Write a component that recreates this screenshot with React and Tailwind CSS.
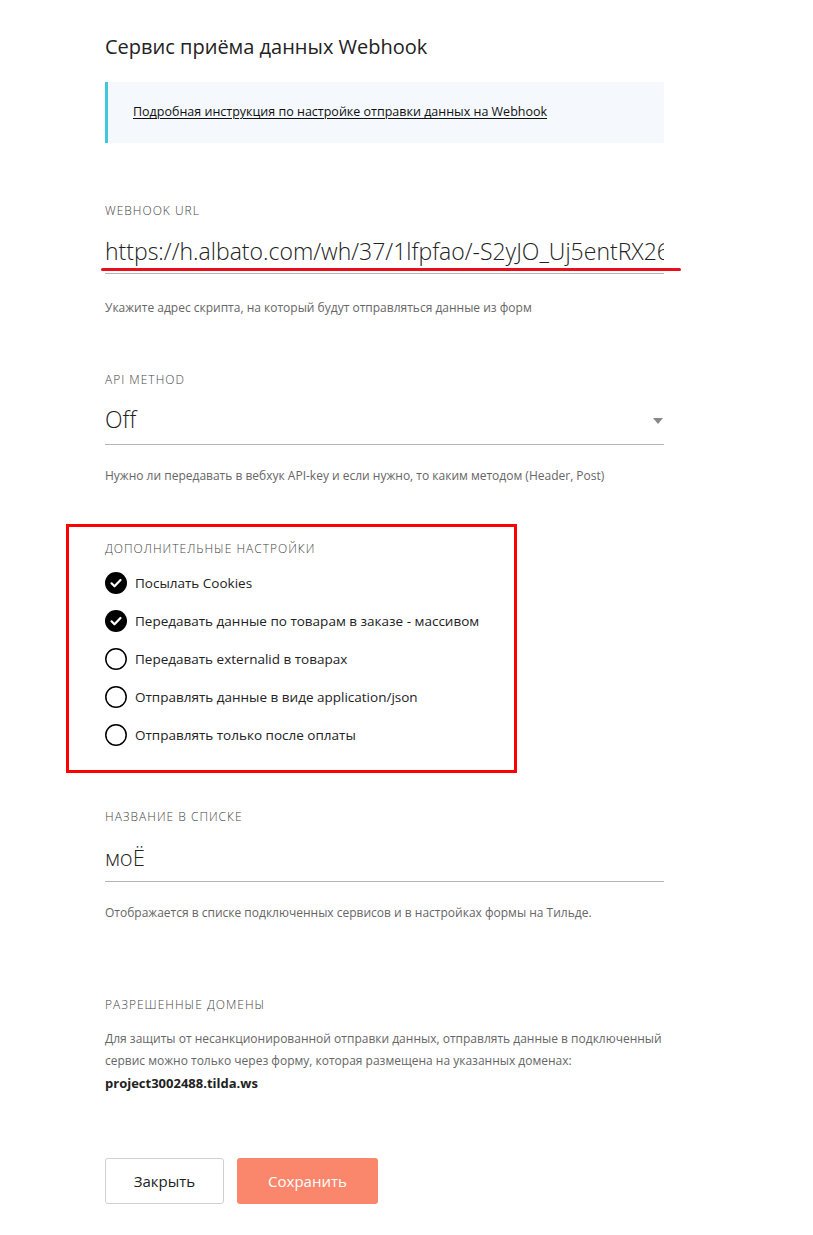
import React from "react";

const font = { fontFamily: "'Open Sans', 'Noto Sans', sans-serif" };

const Check = ({ on }) =>
    on ? (
        <svg width="22" height="22" viewBox="0 0 22 22">
            <circle cx="11" cy="11" r="11" fill="#000" />
            <path d="M6.5 11.3l3 3 6-6.3" fill="none" stroke="#fff" strokeWidth="2.2" strokeLinecap="round" strokeLinejoin="round" />
        </svg>
    ) : (
        <svg width="22" height="22" viewBox="0 0 22 22">
            <circle cx="11" cy="11" r="10.2" fill="none" stroke="#000" strokeWidth="1.5" />
        </svg>
    );

const Label = ({ children }) => (
    <div className="text-[12px] leading-4 tracking-[1px] text-[#444] font-light uppercase">{children}</div>
);

const Hint = ({ children }) => (
    <div className="text-[12px] leading-4 text-[#666]">{children}</div>
);

const options = [
    ["Посылать Cookies", true],
    ["Передавать данные по товарам в заказе - массивом", true],
    ["Передавать externalid в товарах", false],
    ["Отправлять данные в виде application/json", false],
    ["Отправлять только после оплаты", false],
];

export default function App() {
    return (
        <div className="min-h-[1235px] bg-white" style={font}>
            <div className="ml-[105px] w-[559px] pt-[33px] pb-[31px]">
                <h1 className="text-[20px] leading-7 text-[#222] font-normal">Сервис приёма данных Webhook</h1>

                <div className="mt-[21px] h-[61px] bg-[#f5f9fd] border-l-[3px] border-[#3ec8dc] flex items-center pl-[25px]">
                    <a className="text-[12.5px] text-[#111] underline underline-offset-2">
                        Подробная инструкция по настройке отправки данных на Webhook
                    </a>
                </div>

                <div className="mt-[60px]">
                    <Label>Webhook URL</Label>
                    <div className="relative mt-[10px] h-[45px] border-b border-[#b5b5b5] flex items-center">
                        <div className="text-[23px] font-light text-[#222] whitespace-nowrap overflow-hidden w-full">
                            https://h.albato.com/wh/37/1lfpfao/-S2yJO_Uj5entRX26U
                        </div>
                        <div className="absolute left-[-4px] right-[-17px] bottom-[2px] h-[3px] rounded-full bg-[#e8101a]" />
                    </div>
                    <div className="mt-[26px]">
                        <Hint>Укажите адрес скрипта, на который будут отправляться данные из форм</Hint>
                    </div>
                </div>

                <div className="mt-[56px]">
                    <Label>API Method</Label>
                    <div className="mt-[10px] h-[47px] border-b border-[#b5b5b5] flex items-center justify-between pb-[4px]">
                        <div className="text-[23px] font-light text-[#222]">Off</div>
                        <div className="mr-[1px] mt-[4px] w-0 h-0 border-l-[5px] border-r-[5px] border-t-[6px] border-l-transparent border-r-transparent border-t-[#888]" />
                    </div>
                    <div className="mt-[23px]">
                        <Hint>Нужно ли передавать в вебхук API-key и если нужно, то каким методом (Header, Post)</Hint>
                    </div>
                </div>

                <div className="mt-[40px] ml-[-39px] w-[451px] border-[3px] border-[#ff0000] pl-[36px] pt-[14px] pb-[16px]">
                    <Label>Дополнительные настройки</Label>
                    <div className="mt-[7px] flex flex-col">
                        {options.map(([t, on]) => (
                            <div key={t} className="h-[38px] flex items-center gap-[8px]">
                                <Check on={on} />
                                <span className="text-[13.5px] text-[#222]">{t}</span>
                            </div>
                        ))}
                    </div>
                </div>

                <div className="mt-[36px]">
                    <Label>Название в списке</Label>
                    <div className="mt-[10px] h-[47px] border-b border-[#b5b5b5] flex items-center pb-[2px]">
                        <div className="text-[22px] font-light text-[#222]">моЁ</div>
                    </div>
                    <div className="mt-[23px]">
                        <Hint>Отображается в списке подключенных сервисов и в настройках формы на Тильде.</Hint>
                    </div>
                </div>

                <div className="mt-[76px]">
                    <Label>Разрешенные домены</Label>
                    <div className="mt-[15px] text-[12px] leading-[22px] text-[#666]">
                        Для защиты от несанкционированной отправки данных, отправлять данные в подключенный сервис можно только через форму, которая размещена на указанных доменах:
                        <div className="text-[13px] font-bold text-[#222]">project3002488.tilda.ws</div>
                    </div>
                </div>

                <div className="mt-[64px] flex gap-[13px]">
                    <button className="w-[119px] h-[46px] border border-[#d0d0d0] rounded-[3px] bg-white text-[15px] text-[#222]">
                        Закрыть
                    </button>
                    <button className="w-[141px] h-[46px] rounded-[3px] bg-[#fa876b] text-[15px] text-white">
                        Сохранить
                    </button>
                </div>
            </div>
        </div>
    );
}
